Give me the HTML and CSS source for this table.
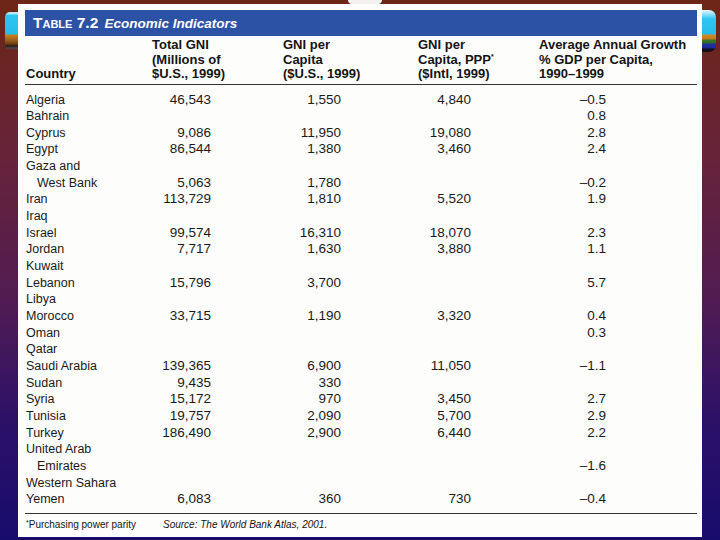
FILE: index.html
```html
<!DOCTYPE html>
<html lang="en">
<head>
<meta charset="utf-8">
<title>Table 7.2 Economic Indicators</title>
<link rel="stylesheet" href="styles.css">
</head>
<body>
<div class="deco deco-left"></div>
<div class="deco deco-right"></div>
<div class="deco deco-top"></div>
<main class="panel">
  <div class="band"><span class="sc">Table</span> 7.2 <em class="band-title">Economic Indicators</em></div>
  <table class="data">
    <colgroup>
      <col class="c1"><col class="c2"><col class="c3"><col class="c4"><col class="c5">
    </colgroup>
    <thead>
      <tr>
        <th>Country</th>
        <th>Total GNI<br>(Millions of<br>$U.S., 1999)</th>
        <th>GNI per<br>Capita<br>($U.S., 1999)</th>
        <th>GNI per<br>Capita, PPP<sup>*</sup><br>($Intl, 1999)</th>
        <th>Average Annual Growth<br>% GDP per Capita,<br>1990–1999</th>
      </tr>
    </thead>
    <tbody>
      <tr><td>Algeria</td><td>46,543</td><td>1,550</td><td>4,840</td><td>–0.5</td></tr>
      <tr><td>Bahrain</td><td></td><td></td><td></td><td>0.8</td></tr>
      <tr><td>Cyprus</td><td>9,086</td><td>11,950</td><td>19,080</td><td>2.8</td></tr>
      <tr><td>Egypt</td><td>86,544</td><td>1,380</td><td>3,460</td><td>2.4</td></tr>
      <tr><td>Gaza and</td><td></td><td></td><td></td><td></td></tr>
      <tr><td class="indent">West Bank</td><td>5,063</td><td>1,780</td><td></td><td>–0.2</td></tr>
      <tr><td>Iran</td><td>113,729</td><td>1,810</td><td>5,520</td><td>1.9</td></tr>
      <tr><td>Iraq</td><td></td><td></td><td></td><td></td></tr>
      <tr><td>Israel</td><td>99,574</td><td>16,310</td><td>18,070</td><td>2.3</td></tr>
      <tr><td>Jordan</td><td>7,717</td><td>1,630</td><td>3,880</td><td>1.1</td></tr>
      <tr><td>Kuwait</td><td></td><td></td><td></td><td></td></tr>
      <tr><td>Lebanon</td><td>15,796</td><td>3,700</td><td></td><td>5.7</td></tr>
      <tr><td>Libya</td><td></td><td></td><td></td><td></td></tr>
      <tr><td>Morocco</td><td>33,715</td><td>1,190</td><td>3,320</td><td>0.4</td></tr>
      <tr><td>Oman</td><td></td><td></td><td></td><td>0.3</td></tr>
      <tr><td>Qatar</td><td></td><td></td><td></td><td></td></tr>
      <tr><td>Saudi Arabia</td><td>139,365</td><td>6,900</td><td>11,050</td><td>–1.1</td></tr>
      <tr><td>Sudan</td><td>9,435</td><td>330</td><td></td><td></td></tr>
      <tr><td>Syria</td><td>15,172</td><td>970</td><td>3,450</td><td>2.7</td></tr>
      <tr><td>Tunisia</td><td>19,757</td><td>2,090</td><td>5,700</td><td>2.9</td></tr>
      <tr><td>Turkey</td><td>186,490</td><td>2,900</td><td>6,440</td><td>2.2</td></tr>
      <tr><td>United Arab</td><td></td><td></td><td></td><td></td></tr>
      <tr><td class="indent">Emirates</td><td></td><td></td><td></td><td>–1.6</td></tr>
      <tr><td>Western Sahara</td><td></td><td></td><td></td><td></td></tr>
      <tr><td>Yemen</td><td>6,083</td><td>360</td><td>730</td><td>–0.4</td></tr>
    </tbody>
  </table>
  <div class="foot">
    <span class="foot-note"><sup>*</sup>Purchasing power parity</span>
    <span class="foot-source">Source: The World Bank Atlas, 2001.</span>
  </div>
</main>
</body>
</html>
```
FILE: styles.css
```css
html, body {
  margin: 0;
  padding: 0;
}
body {
  width: 720px;
  height: 540px;
  overflow: hidden;
  position: relative;
  background: linear-gradient(180deg, #6d2616 0%, #66233a 30%, #521c52 55%, #2c1168 78%, #170c6c 100%);
  font-family: "Liberation Sans", Arial, sans-serif;
}

.deco {
  position: absolute;
  z-index: 0;
}
.deco-left {
  left: 5px;
  top: 12px;
  width: 24px;
  height: 38px;
  border-radius: 5px 0 0 5px;
  background: linear-gradient(180deg, #b8e8f4 0, #b8e8f4 2px, #2cc6f2 3px, #27bdeb 22px, #c8801e 23px, #a0601a 28px, #6a4012 32px, #2a1a10 34px, #4a4a50 36px, transparent 38px);
}
.deco-right {
  left: 696px;
  top: 10px;
  width: 20px;
  height: 42px;
  border-radius: 0 7px 7px 0;
  background: linear-gradient(180deg, #e8f8fc 0, #7ddcf6 5px, #2cc6f2 9px, #27bdeb 24px, #d08a20 25px, #c07818 29px, #3c7a2c 30px, #2e6a26 33px, #2232a8 34px, #1a2a90 38px, #101018 39px, #151020 42px);
}
.deco-top {
  left: 348px;
  top: -6px;
  width: 34px;
  height: 13px;
  border-radius: 50%;
  background: #f4f2f0;
}

.panel {
  position: relative;
  z-index: 1;
  box-sizing: border-box;
  width: 684px;
  height: 533px;
  margin: 4px 0 0 18px;
  padding: 6px 5px 0 7px;
  background: #fdfdfc;
  color: #141414;
}

.band {
  height: 26px;
  box-sizing: border-box;
  padding-left: 8px;
  background: #2c52a6;
  color: #ffffff;
  font-weight: bold;
  font-size: 15.5px;
  line-height: 26px;
  white-space: nowrap;
}
.sc {
  font-variant: small-caps;
}
.band-title {
  font-size: 13.5px;
  font-style: italic;
  margin-left: 2px;
}

.data {
  width: 672px;
  border-collapse: collapse;
  table-layout: fixed;
}
.c1 { width: 127px; }
.c2 { width: 131px; }
.c3 { width: 135px; }
.c4 { width: 121px; }
.c5 { width: 158px; }

.data th {
  font-size: 13px;
  font-weight: bold;
  line-height: 14.5px;
  text-align: left;
  vertical-align: bottom;
  padding: 2px 0 2px 0;
  border-bottom: 1px solid #333;
  white-space: nowrap;
}
.data th:first-child {
  padding-left: 1px;
}
.data sup {
  font-size: 7px;
  line-height: 0;
  vertical-align: 5px;
}

.data td {
  font-size: 13.5px;
  line-height: 16.65px;
  height: 16.65px;
  padding: 0;
  text-align: right;
  white-space: nowrap;
  color: #1a1a1a;
}
.data td:nth-child(1) {
  font-size: 12.5px;
  text-align: left;
  padding-left: 1px;
}
.data td.indent {
  padding-left: 12px;
}
.data td:nth-child(2) { padding-right: 72px; }
.data td:nth-child(3) { padding-right: 77px; }
.data td:nth-child(4) { padding-right: 68px; }
.data td:nth-child(5) { padding-right: 91px; }

.data tbody tr:first-child td {
  padding-top: 7px;
}
.data tbody tr:last-child td {
  padding-bottom: 5px;
  border-bottom: 1px solid #333;
}

.foot {
  display: flex;
  font-size: 10px;
  line-height: 13px;
  padding-top: 4px;
}
.foot-note {
  width: 137px;
  padding-left: 1px;
}
.foot-note sup {
  font-size: 7px;
  line-height: 0;
  vertical-align: 3px;
}
.foot-source {
  font-style: italic;
}
```
